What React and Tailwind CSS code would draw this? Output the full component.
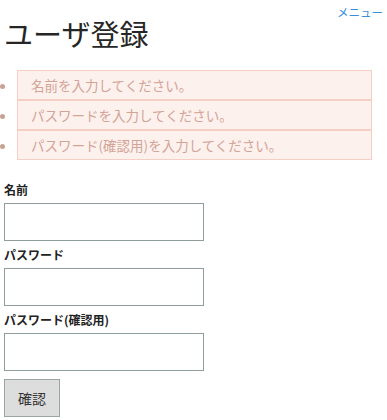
const font = { fontFamily: '"Noto Sans CJK JP", "Noto Sans", sans-serif' };

const errors = [
  "名前を入力してください。",
  "パスワードを入力してください。",
  "パスワード(確認用)を入力してください。",
];

const fields = [
  { label: "名前", type: "text" },
  { label: "パスワード", type: "password" },
  { label: "パスワード(確認用)", type: "password" },
];

export default function App() {
  return (
    <div className="min-h-screen bg-white text-[#222]" style={font}>
      {/* メニュー */}
      <div className="flex justify-end h-[18px] items-end pr-[4px]">
        <a href="#" className="text-[11.5px] leading-none text-[#3a8ede]">
          メニュー
        </a>
      </div>

      <h1 className="px-[4px] text-[29px] leading-[30px] font-normal text-[#262626]">ユーザ登録</h1>

      {/* エラー */}
      <ul className="mt-[22px] w-[372px] list-disc pl-[17px] marker:text-[#c9a195]">
        {errors.map((e) => (
          <li
            key={e}
            className="h-[30px] border border-[#f5cfc4] bg-[#fdf1ee] pl-[13px] text-[13.5px] leading-[28px] text-[#d3a396]"
          >
            {e}
          </li>
        ))}
      </ul>

      {/* フォーム */}
      <form className="mt-[21px] px-[4px]" onSubmit={(ev) => ev.preventDefault()}>
        {fields.map((f, i) => (
          <div key={f.label} className={i > 0 ? "mt-[5px]" : ""}>
            <label className="block text-[12px] font-bold leading-[18px] mb-[4px] text-[#222]">
              {f.label}
            </label>
            <input
              type={f.type}
              className="block w-[200px] h-[38px] border border-[#8e9e9e] bg-white outline-none px-2"
            />
          </div>
        ))}
        <button
          type="submit"
          className="mt-[8px] w-[56px] h-[38px] border border-[#9aa5a5] bg-[#dddddd] text-[14px] text-[#333]"
        >
          確認
        </button>
      </form>
    </div>
  );
}
